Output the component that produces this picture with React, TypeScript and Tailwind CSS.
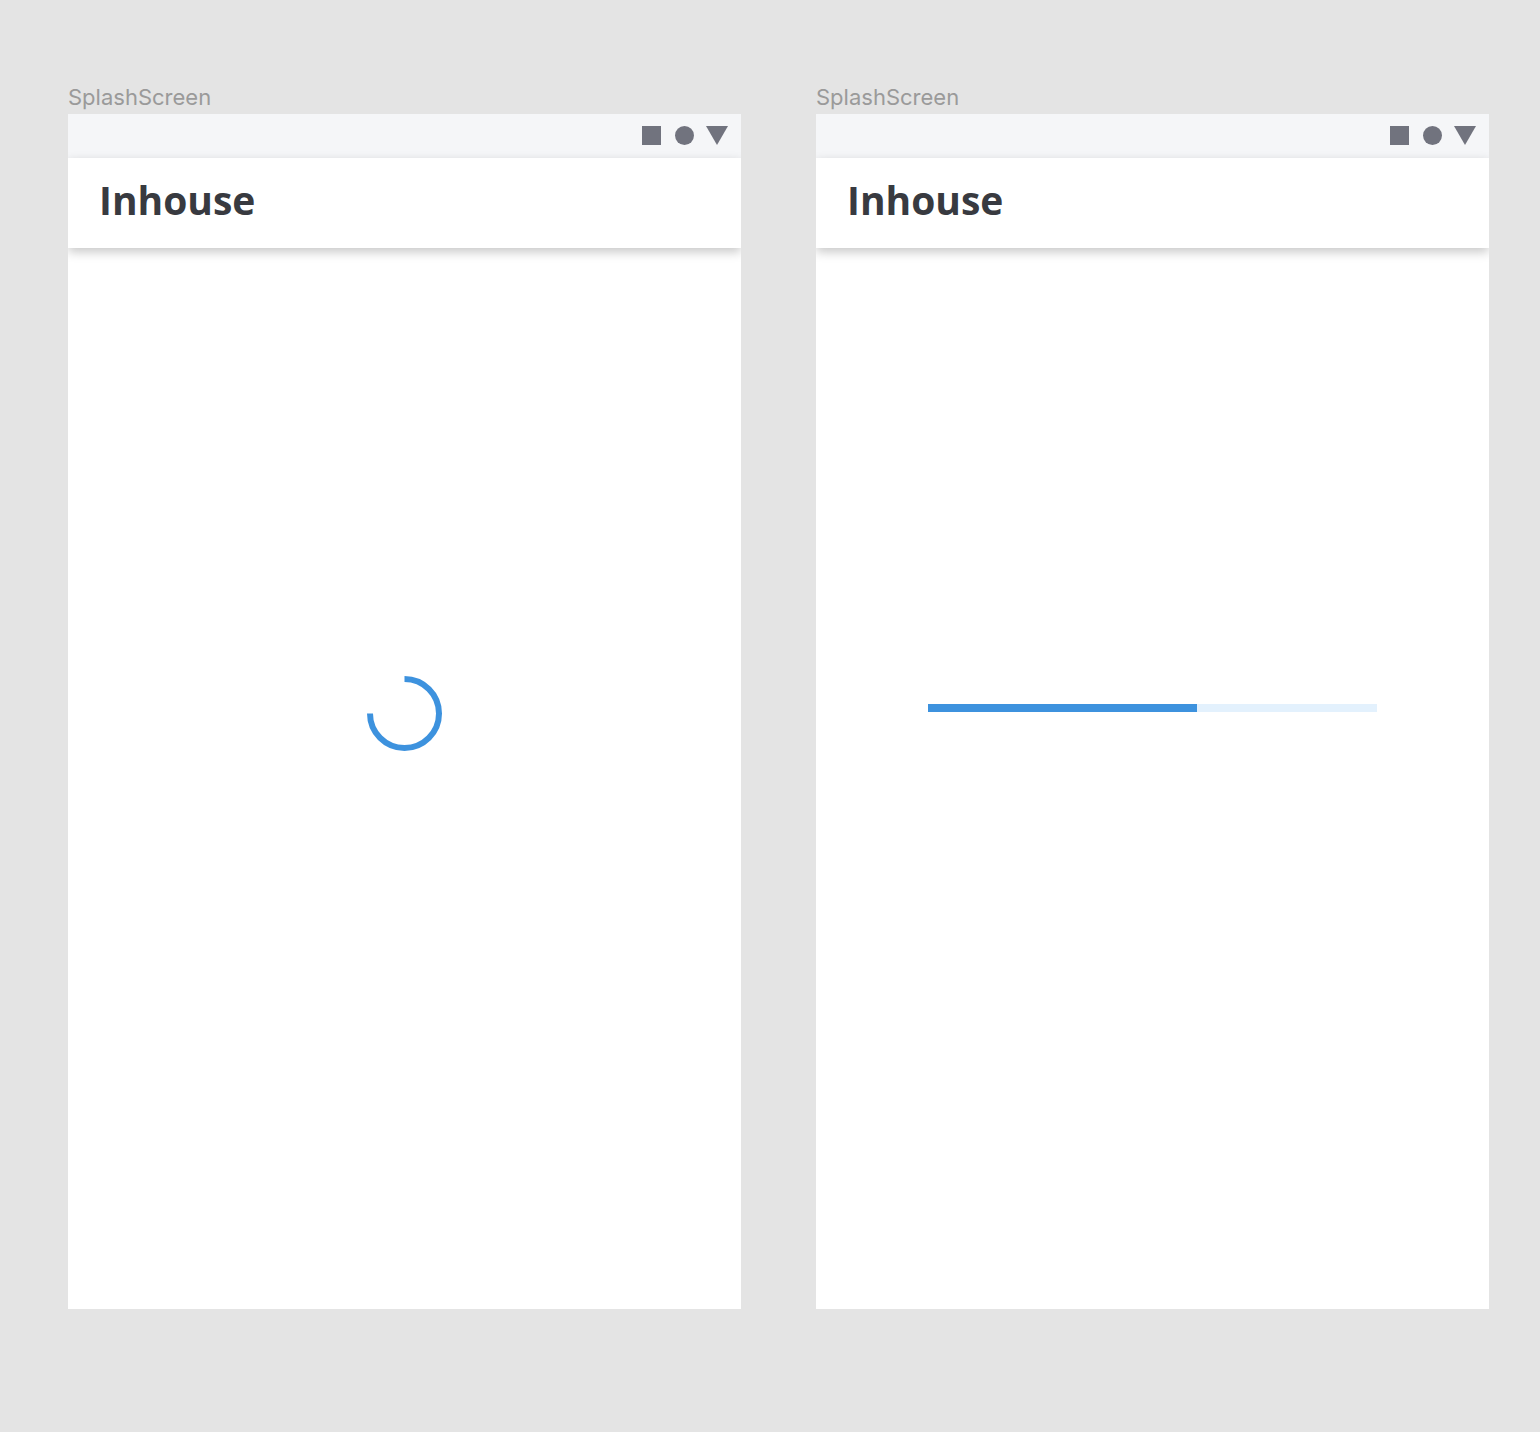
import React from "react";

function StatusBar() {
  return (
    <div className="h-[44px] bg-[#f5f6f8] flex items-center justify-end pr-[13px]">
      <div className="flex items-center -mt-[1px]">
        <div className="w-[19px] h-[19px] bg-[#71737e]" />
        <div className="w-[19px] h-[19px] rounded-full bg-[#71737e] ml-[14px]" />
        <svg width="22" height="19" viewBox="0 0 22 19" className="ml-[12px]">
          <polygon points="0,0 22,0 11,19" fill="#71737e" />
        </svg>
      </div>
    </div>
  );
}

function Header() {
  return (
    <div className="relative z-10 h-[90px] bg-white shadow-[0_4px_10px_rgba(0,0,0,0.22)] pl-[31px] pt-[15px]">
      <div className="text-[39px] leading-[54px] font-bold text-[#383a40] font-['Open_Sans',sans-serif]">
        Inhouse
      </div>
    </div>
  );
}

function Frame({ children, pt }: { children: React.ReactNode; pt: string }) {
  return (
    <div className="flex flex-col">
      <div className="h-[26px] leading-[26px] text-[22px] text-[#9a9a9a] font-['Inter',sans-serif] mb-[4px] -mt-[2px]">
        SplashScreen
      </div>
      <div className="w-[673px] h-[1195px] bg-white flex flex-col overflow-hidden">
        <StatusBar />
        <Header />
        <div className={"flex-1 flex flex-col items-center " + pt}>{children}</div>
      </div>
    </div>
  );
}

export default function App() {
  return (
    <div className="w-[1540px] h-[1432px] bg-[#e4e4e4] pl-[68px] pt-[86px] flex gap-[75px]">
      <Frame pt="pt-[428px]">
        <svg width="75" height="75" viewBox="0 0 75 75">
          <path
            d="M 37.5 3 A 34.5 34.5 0 1 1 3 37.5"
            fill="none"
            stroke="#3d92de"
            strokeWidth="6"
          />
        </svg>
      </Frame>
      <Frame pt="pt-[456px]">
        <div className="w-[449px] h-[8px] bg-[#e3f1fd] flex">
          <div className="h-full bg-[#3d92de]" style={{ width: "269px" }} />
        </div>
      </Frame>
    </div>
  );
}
